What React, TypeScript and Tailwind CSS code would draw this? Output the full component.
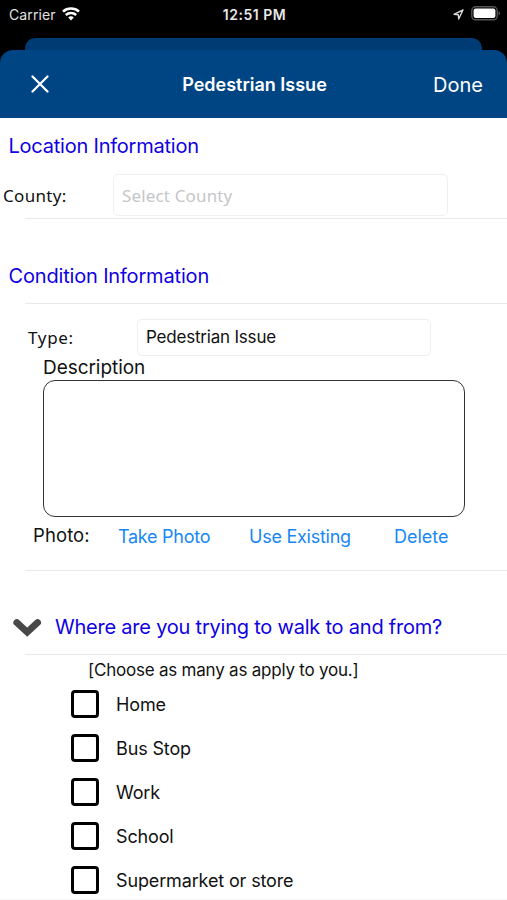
import { useState } from "react";
import { clsx } from "clsx";

const places = ["Home", "Bus Stop", "Work", "School", "Supermarket or store"];

function Divider() {
  return <div className="h-px ml-[25px] bg-[#e9e9e9] shrink-0" />;
}

function StatusBar() {
  return (
    <div className="h-[38px] pt-[3px] pl-[9px] pr-[6px] text-white text-[14px]">
      <div className="grid grid-cols-3 items-center h-[22px]">
        <div className="flex items-center gap-[6px] text-[#e0e0e0]">
          <span className="tracking-[0.12px]">Carrier</span>
          <svg width="18" height="14" viewBox="0 0 18 14" fill="none">
            <path d="M1 4.6C5.4.6 12.6.6 17 4.6" stroke="white" strokeWidth="2.5" />
            <path d="M3.8 8c2.9-2.6 7.5-2.6 10.4 0" stroke="white" strokeWidth="2.4" />
            <path d="M6.2 10.4c1.6-1.4 4-1.4 5.6 0L9 13.4z" fill="white" />
          </svg>
        </div>
        <span className="text-center font-semibold whitespace-nowrap tracking-[0.5px] text-[#e8e8e8] -ml-px">
          12:51 PM
        </span>
        <div className="flex items-center justify-end gap-[7px]">
          <svg width="11" height="11" viewBox="0 0 11 11" fill="none">
            <path
              d="M10 1 1 5.3l4.3.4.4 4.3z"
              stroke="#d8d8d8"
              strokeWidth="1.4"
              strokeLinejoin="round"
            />
          </svg>
          <svg className="-mt-px" width="30" height="15" viewBox="0 0 30 15" fill="none">
            <rect x=".8" y=".8" width="25.4" height="13" rx="3.8" stroke="#555" strokeWidth="1.4" />
            <rect x="2.6" y="2.6" width="21.8" height="9.4" rx="2" fill="white" />
            <path d="M27.6 5.2c1.8.7 1.8 3.5 0 4.2z" fill="#666" />
          </svg>
        </div>
      </div>
    </div>
  );
}

function Header() {
  return (
    <header className="h-[68px] shrink-0 rounded-t-[13px] bg-[#004583] text-white grid grid-cols-[1fr_auto_1fr] items-center pl-[31px] pr-[24px]">
      <button className="w-[18px]" aria-label="Close">
        <svg width="18" height="18" viewBox="0 0 18 18" fill="none">
          <path
            d="M1.5 1.5l15 15M16.5 1.5l-15 15"
            stroke="white"
            strokeWidth="2.2"
            strokeLinecap="round"
          />
        </svg>
      </button>
      <h1 className="font-semibold text-[18px] -ml-[5px] pt-px">
        Pedestrian Issue
      </h1>
      <button className="justify-self-end pt-px text-[20px]">Done</button>
    </header>
  );
}

export default function App() {
  const [selected, setSelected] = useState<string[]>([]);

  const toggle = (place: string) => {
    setSelected((prev) =>
      prev.includes(place) ? prev.filter((p) => p !== place) : [...prev, place],
    );
  };

  return (
    <div className="w-[507px] h-[900px] overflow-hidden bg-black flex flex-col font-[Inter,sans-serif] text-[#111]">
      <StatusBar />
      <div className="h-3 mx-[25px] shrink-0 rounded-t-[10px] bg-[#003c73]" />
      <Header />

      <main className="flex-1 min-h-0 overflow-hidden bg-white border-b border-[#f5f5f5] flex flex-col">
        <h2 className="h-14 shrink-0 flex items-center pl-[8.5px] text-[20px] tracking-[-0.22px] text-[#1000e2]">
          Location Information
        </h2>
        <div className="h-11 shrink-0 flex items-start font-['Noto_Sans',sans-serif] text-[17px]">
          <label className="w-[113px] pl-[3px] leading-[43px] tracking-[0.3px]">
            County:
          </label>
          <div className="w-[335px] h-[42px] rounded-[5px] border-[1.5px] border-[#f0f0f0] pl-2 leading-[41px] tracking-[0.15px] text-[#c6c6c8]">
            Select County
          </div>
        </div>
        <Divider />

        <h2 className="h-[84px] shrink-0 flex items-center pt-[30px] pl-[8.5px] text-[20px] tracking-[-0.17px] text-[#1000e2]">
          Condition Information
        </h2>
        <Divider />

        <div className="mt-[15px] h-[37px] shrink-0 flex items-center">
          <label className="w-[137px] pl-[28px] font-['Noto_Sans',sans-serif] text-[17px] tracking-[0.7px]">
            Type:
          </label>
          <div className="w-[294px] h-[37px] rounded-[5px] border border-[#eeeeee] pl-2 leading-[35px] text-[17px] tracking-[-0.2px]">
            Pedestrian Issue
          </div>
        </div>
        <p className="h-6 shrink-0 pl-[43px] leading-6 text-[19px] tracking-[-0.05px]">
          Description
        </p>
        <div className="ml-[43px] w-[422px] h-[137px] shrink-0 rounded-[12px] border-[1.5px] border-[#333]" />
        <div className="h-[53px] shrink-0 pb-[15px] flex items-center text-[18px] text-[#1787f5]">
          <span className="w-[118px] pl-[33px] text-[18.5px] tracking-[0.1px] text-[#111]">
            Photo:
          </span>
          <button className="w-[131px] text-left tracking-[-0.27px]">
            Take Photo
          </button>
          <button className="w-[145px] text-left tracking-[-0.25px]">
            Use Existing
          </button>
          <button>Delete</button>
        </div>
        <Divider />

        <div className="h-[83px] shrink-0 flex items-center pt-[29px] pl-[13px] text-[20px] tracking-[-0.22px] text-[#1000e2]">
          <svg width="29" height="19" viewBox="0 0 29 19" fill="none">
            <path
              d="M3.8 4.6l10.4 9.6 10.4-9.6"
              stroke="#484848"
              strokeWidth="6.8"
              strokeLinecap="round"
            />
          </svg>
          <h2 className="pl-[13px]">Where are you trying to walk to and from?</h2>
        </div>
        <Divider />

        <p className="h-[27px] shrink-0 pt-1 pl-[88px] leading-[23px] text-[17px] tracking-[-0.22px]">
          [Choose as many as apply to you.]
        </p>
        {places.map((place) => (
          <button
            key={place}
            className="h-11 shrink-0 flex items-center gap-[17px] pl-[71px] text-[18px] tracking-[-0.14px]"
            onClick={() => toggle(place)}
          >
            <span
              className={clsx(
                "size-7 rounded-[4px] border-3 border-black",
                selected.includes(place) && "bg-gray-700",
              )}
            />
            <span className="pt-px">{place}</span>
          </button>
        ))}
      </main>
    </div>
  );
}
